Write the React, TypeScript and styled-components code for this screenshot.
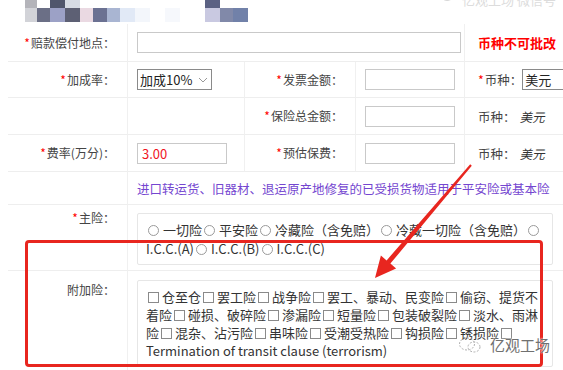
import React from "react";
import styled, { createGlobalStyle } from "styled-components";

const GlobalStyle = createGlobalStyle`
  html, body {
    margin: 0;
    padding: 0;
    background: #fff;
  }
  body {
    font-family: "Noto Sans CJK SC", "Noto Sans", sans-serif;
    color: #333;
  }
`;

const Page = styled.div`
  position: relative;
  width: 563px;
  height: 370px;
  overflow: hidden;
  background: #fff;
`;

const Header = styled.div`
  height: 24px;
  padding-left: 25px;
`;

const TopMark = styled.div`
  position: absolute;
  top: -10px;
  left: 442px;
  display: flex;
  align-items: center;
  gap: 6px;
  font-size: 13px;
  color: #dcdcdc;
  white-space: nowrap;
`;

const Form = styled.div`
  display: grid;
  grid-template-columns: 120px 117px 111px 109px 140px;
  grid-template-rows: 38px 36px 37px 37px 33px 66px 110px;
  margin-left: 8px;
  font-size: 13px;
`;

const Cell = styled.div<{ $span?: number; $top?: number; $last?: boolean }>`
  grid-column: span ${(p) => p.$span ?? 1};
  display: flex;
  align-items: ${(p) => (p.$top !== undefined ? "flex-start" : "center")};
  padding-top: ${(p) => p.$top ?? 0}px;
  box-sizing: border-box;
  border-bottom: 1px solid #eeeeee;
  border-right: ${(p) => (p.$last ? "none" : "1px solid #f0f0f0")};
  white-space: nowrap;
  min-width: 0;
`;

const LabelCell = styled(Cell)`
  justify-content: flex-end;
  padding-right: 12px;
  font-size: 12px;
  line-height: 18px;
  color: #444;
`;

const FieldCell = styled(Cell)`
  padding-left: 9px;
`;

const CurrencyCell = styled(Cell)`
  padding-left: 13px;
  font-size: 12.5px;
  color: #444;
`;

const Star = styled.span`
  color: #f00;
  margin-right: 1px;
`;

const Note = styled.span`
  color: #f00;
  font-weight: bold;
  font-size: 13px;
`;

const TextInput = styled.input<{ $w: number; $red?: boolean }>`
  width: ${(p) => p.$w}px;
  height: 21px;
  box-sizing: border-box;
  border: 1px solid #c9c9c9;
  padding: 0 4px;
  font: inherit;
  font-size: 13px;
  color: ${(p) => (p.$red ? "#f0141e" : "#333")};
  outline: none;
  background: #fff;
`;

const SelectBox = styled.div<{ $w: number }>`
  width: ${(p) => p.$w}px;
  height: 21px;
  box-sizing: border-box;
  border: 1px solid #8a8a8a;
  display: flex;
  align-items: center;
  justify-content: space-between;
  padding: 0 3px 0 2px;
  font-size: 13px;
  color: #222;
  overflow: hidden;
`;

const Slanted = styled.span`
  display: inline-block;
  transform: skewX(-12deg);
  margin-left: 5px;
  color: #333;
`;

const Hint = styled.span`
  color: #7446d0;
  font-size: 12.5px;
`;

const OptionBox = styled.div<{ $pt?: number }>`
  width: 416px;
  box-sizing: border-box;
  border: 1px solid #e6e6e6;
  border-radius: 2px;
  padding: ${(p) => p.$pt ?? 6}px 8px 6px;
  font-size: 13px;
  color: #333;
`;

const Line = styled.div<{ $h: number }>`
  line-height: ${(p) => p.$h}px;
  white-space: nowrap;
`;

const Radio = styled.span`
  display: inline-block;
  width: 9px;
  height: 9px;
  border: 1px solid #9a9a9a;
  border-radius: 50%;
  margin: 0 4px 0 2px;
  vertical-align: -1px;
`;

const Check = styled.span`
  display: inline-block;
  width: 9px;
  height: 9px;
  border: 1px solid #8a8a8a;
  margin: 0 3px 0 2px;
  vertical-align: -1px;
`;

const RedFrame = styled.div`
  position: absolute;
  left: 25px;
  top: 240px;
  width: 518px;
  height: 127px;
  box-sizing: border-box;
  border: 3px solid #e8261f;
  border-radius: 4px;
  pointer-events: none;
`;

const Overlay = styled.svg`
  position: absolute;
  left: 0;
  top: 0;
  pointer-events: none;
`;

const Watermark = styled.div`
  position: absolute;
  left: 458px;
  top: 334px;
  display: flex;
  align-items: center;
  gap: 8px;
  font-size: 15px;
  color: #707070;
  text-shadow: 0 0 2px #fff, 0 0 2px #fff;
  white-space: nowrap;
`;

const mosaic: [number, number, number, number, string][] = [
  [25, 0, 12, 8, "#b4b4ba"],
  [50, 0, 15, 8, "#50566c"],
  [65, 0, 15, 8, "#d6dbe4"],
  [205, 0, 15, 8, "#5b6183"],
  [25, 8, 12, 14, "#d2d3d8"],
  [37, 8, 13, 14, "#6b6f86"],
  [50, 8, 15, 14, "#9ca1c6"],
  [65, 8, 15, 14, "#5d6074"],
  [80, 8, 13, 14, "#ead9e2"],
  [93, 8, 14, 14, "#6b7192"],
  [107, 8, 13, 14, "#a9b5d2"],
  [120, 8, 15, 14, "#e1e9f6"],
  [135, 8, 15, 14, "#f3f6fb"],
  [165, 8, 15, 14, "#f6f8fc"],
  [205, 8, 15, 14, "#c9c9e1"],
  [220, 8, 13, 14, "#8189a9"],
  [233, 8, 15, 14, "#7181a9"],
];

const Mosaic = () => (
  <svg width="240" height="24" viewBox="25 0 240 24">
    {mosaic.map(([x, y, w, h, c], i) => (
      <rect key={i} x={x} y={y} width={w} height={h} fill={c} />
    ))}
  </svg>
);

const Label = ({ text, star = true }: { text: string; star?: boolean }) => (
  <>
    {star && <Star>*</Star>}
    {text}：
  </>
);

const App = () => {
  return (
    <Page>
      <GlobalStyle />
      <Header>
        <Mosaic />
      </Header>
      <TopMark>
        <svg width="14" height="8" viewBox="0 0 14 8">
          <path d="M1 3 Q5 7 13 1" stroke="#d8d8d8" fill="none" strokeWidth="1" />
        </svg>
        <span>亿观工场 微信号</span>
      </TopMark>

      <Form>
        <LabelCell><Label text="赔款偿付地点" /></LabelCell>
        <FieldCell $span={3}><TextInput $w={324} readOnly /></FieldCell>
        <CurrencyCell $last><Note>币种不可批改</Note></CurrencyCell>

        <LabelCell><Label text="加成率" /></LabelCell>
        <FieldCell>
          <SelectBox $w={75}>
            <span>加成10%</span>
            <svg width="10" height="6" viewBox="0 0 10 6">
              <path d="M1 1 L5 5 L9 1" stroke="#999" fill="none" strokeWidth="1" />
            </svg>
          </SelectBox>
        </FieldCell>
        <LabelCell><Label text="发票金额" /></LabelCell>
        <FieldCell><TextInput $w={90} readOnly /></FieldCell>
        <CurrencyCell $last>
          <Star>*</Star>币种：
          <SelectBox $w={60}><span>美元</span></SelectBox>
        </CurrencyCell>

        <LabelCell />
        <FieldCell />
        <LabelCell><Label text="保险总金额" /></LabelCell>
        <FieldCell><TextInput $w={90} readOnly /></FieldCell>
        <CurrencyCell $last>币种：<Slanted>美元</Slanted></CurrencyCell>

        <LabelCell><Label text="费率(万分)" /></LabelCell>
        <FieldCell><TextInput $w={90} $red readOnly value="3.00" /></FieldCell>
        <LabelCell><Label text="预估保费" /></LabelCell>
        <FieldCell><TextInput $w={90} readOnly /></FieldCell>
        <CurrencyCell $last>币种：<Slanted>美元</Slanted></CurrencyCell>

        <LabelCell />
        <FieldCell $span={4} $last>
          <Hint>进口转运货、旧器材、退运原产地修复的已受损货物适用于平安险或基本险</Hint>
        </FieldCell>

        <LabelCell $top={4}><Label text="主险" /></LabelCell>
        <FieldCell $span={4} $top={8} $last>
          <OptionBox>
            <Line $h={19}>
              <Radio />一切险<Radio />平安险<Radio />冷藏险（含免赔）<Radio />冷藏一切险（含免赔）<Radio />
            </Line>
            <Line $h={19}>
              I.C.C.(A)<Radio />I.C.C.(B)<Radio />I.C.C.(C)
            </Line>
          </OptionBox>
        </FieldCell>

        <LabelCell $top={10}><Label text="附加险" star={false} /></LabelCell>
        <FieldCell $span={4} $top={9} $last>
          <OptionBox $pt={7}>
            <Line $h={18}>
              <Check />仓至仓<Check />罢工险<Check />战争险<Check />罢工、暴动、民变险<Check />偷窃、提货不
            </Line>
            <Line $h={18}>
              着险<Check />碰损、破碎险<Check />渗漏险<Check />短量险<Check />包装破裂险<Check />淡水、雨淋
            </Line>
            <Line $h={18}>
              险<Check />混杂、沾污险<Check />串味险<Check />受潮受热险<Check />钩损险<Check />锈损险<Check />
            </Line>
            <Line $h={18}>Termination of transit clause (terrorism)</Line>
          </OptionBox>
        </FieldCell>
      </Form>

      <RedFrame />
      <Overlay width="563" height="370" viewBox="0 0 563 370">
        <polygon
          points="470.2,164.3 471.8,165.7 390.4,263.6 396.1,268.5 375,278 380.9,255.5 386.6,260.4"
          fill="#e8261f"
        />
      </Overlay>

      <Watermark>
        <svg width="24" height="18" viewBox="0 0 24 18">
          <ellipse cx="9" cy="8" rx="7.5" ry="6" fill="none" stroke="#b0b0b0" strokeWidth="1" strokeDasharray="2 1.5" />
          <ellipse cx="16" cy="11" rx="6" ry="5" fill="none" stroke="#b0b0b0" strokeWidth="1" strokeDasharray="2 1.5" />
        </svg>
        <span>亿观工场</span>
      </Watermark>
    </Page>
  );
};

export default App;
